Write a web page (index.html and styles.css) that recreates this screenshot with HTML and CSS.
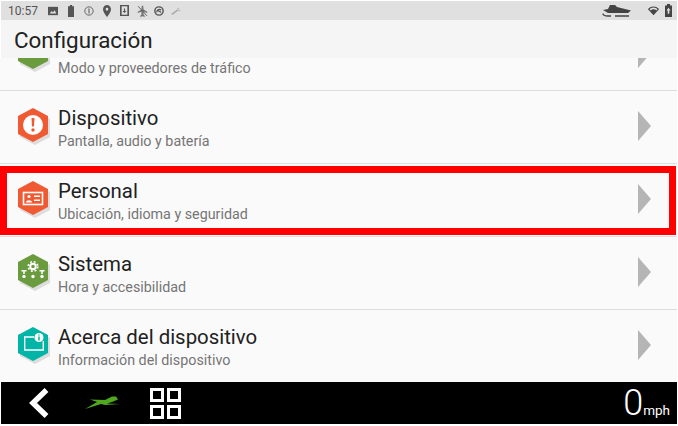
FILE: index.html
```html
<!DOCTYPE html>
<html lang="es">
<head>
  <meta charset="UTF-8" />
  <meta name="viewport" content="width=device-width, initial-scale=1.0" />
  <title>Configuración</title>
  <link rel="stylesheet" href="styles.css">
</head>
<body>
  <div class="screen">

    <div class="status-bar">
      <span class="clock">10:57</span>
      <div class="status-icons">
        <svg width="10" height="10" viewBox="0 0 12 12"><path fill="#555" d="M0 1h12v10H0z"/><path fill="#e0e0e0" d="M2 9l2.500-3 1.500 1.500L8 5l2 4z"/></svg>
        <svg class="gap-a" width="6" height="12" viewBox="0 0 8 14" preserveAspectRatio="none"><path fill="#555" d="M2.500 0h3v1.500H8V14H0V1.500h2.500z"/></svg>
        <svg class="gap-b" width="10" height="10" viewBox="0 0 12 12"><circle cx="6" cy="6" r="5" fill="none" stroke="#666" stroke-width="1.200"/><path stroke="#666" stroke-width="1.400" d="M6 3v6"/></svg>
        <svg class="gap-c" width="8" height="12" viewBox="0 0 10 14" preserveAspectRatio="none"><path fill="#555" fill-rule="evenodd" d="M5 0a5 5 0 0 1 5 5c0 3.500-5 9-5 9S0 8.500 0 5a5 5 0 0 1 5-5zm0 3.300a1.700 1.700 0 1 0 0 3.400 1.700 1.700 0 0 0 0-3.400z"/></svg>
        <svg class="gap-d" width="9" height="11" viewBox="0 0 11 13" preserveAspectRatio="none"><path fill="#555" d="M0 0h11v13H0z"/><path fill="#e0e0e0" d="M2 1.500h7v10H2z"/><path fill="#555" d="M4.800 4h1.400v3H8L5.500 9.500 3 7h1.800z"/></svg>
        <svg class="gap-e" width="11" height="12" viewBox="0 0 15 15" preserveAspectRatio="none"><path fill="#777" d="M6.500 1h2l.5 4.500 5 3v1.500L9 8.500V12l1.500 1.500V15l-3-1-3 1v-1.500L6 12V8.500L1 10V8.500l5-3z"/><path stroke="#555" stroke-width="1.200" d="M1.500 1.500l12 12"/></svg>
        <svg class="gap-f" width="10" height="10" viewBox="0 0 14 14"><circle cx="7" cy="7" r="5.800" fill="none" stroke="#555" stroke-width="2"/><path fill="none" stroke="#555" stroke-width="1.800" d="M4 9a3.500 3.500 0 0 1 6-3M4.500 5.500L10 9"/></svg>
        <svg class="gap-g" width="10" height="8" viewBox="0 0 13 10"><path stroke="#aaa" stroke-width="2" d="M1 9.500L8.500 4"/><path fill="none" stroke="#aaa" stroke-width="1.300" d="M8 2.500l2.500-1.500M9 5l3-1.500"/></svg>
      </div>
      <div class="status-right">
        <svg width="30" height="13" viewBox="0 0 30 13"><path fill="#444" d="M1 6l5-1 2-4h5l2 2 6 1.500 8 2-3 2.500H6z"/><path fill="none" stroke="#444" stroke-width="1.300" d="M1 9.500c0 1.500 2 2.500 5 2.500h3M13 12h14"/></svg>
        <svg class="wifi" width="11" height="10" viewBox="0 0 13 10"><path fill="none" stroke="#444" stroke-width="1.300" d="M.8 2.700a8 8 0 0 1 11.400 0L6.500 9z"/><path fill="#444" d="M2.800 4.500a5.500 5.500 0 0 1 7.400 0L6.500 9z"/></svg>
        <svg class="batt" width="7" height="13" viewBox="0 0 7 14" preserveAspectRatio="none"><path fill="#444" d="M2 0h3v1.500h2V14H0V1.500h2z"/><path fill="#e0e0e0" d="M3.500 4L5.500 7H4.300v3.500H2.700V7H1.500z"/></svg>
      </div>
    </div>

    <header class="title-bar">Configuración</header>

    <div class="list-view">
      <div class="list">
        <div class="row">
          <svg class="hex" width="34" height="38" viewBox="0 0 34 38"><polygon class="hex-shadow" points="17,3 32,11 32,29 17,37 2,29 2,11"/><polygon class="green" points="15,0 30,8 30,26 15,34 0,26 0,8"/></svg>
          <div class="row-text">
            <div class="row-title"></div>
            <div class="row-sub">Modo y proveedores de tráfico</div>
          </div>
          <span class="chevron"></span>
        </div>

        <div class="row">
          <svg class="hex" width="34" height="38" viewBox="0 0 34 38">
            <polygon class="hex-shadow" points="17,3 32,11 32,29 17,37 2,29 2,11"/>
            <polygon class="orange" points="15,0 30,8 30,26 15,34 0,26 0,8"/>
            <circle cx="15" cy="17" r="10" fill="#fff"/>
            <path fill="#f05a33" d="M13.500 10h3l-.5 8.500h-2z"/>
            <circle cx="15" cy="22" r="1.700" fill="#f05a33"/>
          </svg>
          <div class="row-text">
            <div class="row-title">Dispositivo</div>
            <div class="row-sub">Pantalla, audio y batería</div>
          </div>
          <span class="chevron"></span>
        </div>

        <div class="row selected">
          <svg class="hex" width="34" height="38" viewBox="0 0 34 38">
            <polygon class="hex-shadow" points="17,3 32,11 32,29 17,37 2,29 2,11"/>
            <polygon class="orange" points="15,0 30,8 30,26 15,34 0,26 0,8"/>
            <rect x="5.500" y="11.500" width="19" height="12" fill="none" stroke="#fff" stroke-width="1.600"/>
            <circle cx="11" cy="15.500" r="1.600" fill="#fff"/>
            <path fill="#fff" d="M8 21.500c0-3 6-3 6 0zM16 14.500h6V16h-6zM16 18.500h6V20h-6z"/>
          </svg>
          <div class="row-text">
            <div class="row-title">Personal</div>
            <div class="row-sub">Ubicación, idioma y seguridad</div>
          </div>
          <span class="chevron"></span>
        </div>

        <div class="row">
          <svg class="hex" width="34" height="38" viewBox="0 0 34 38">
            <polygon class="hex-shadow" points="17,3 32,11 32,29 17,37 2,29 2,11"/>
            <polygon class="green" points="15,0 30,8 30,26 15,34 0,26 0,8"/>
            <circle cx="15" cy="12.500" r="2.800" fill="none" stroke="#fff" stroke-width="2"/>
            <circle cx="15" cy="12.500" r="4.800" fill="none" stroke="#fff" stroke-width="1.600" stroke-dasharray="1.900 1.900"/>
            <path stroke="#fff" stroke-width="1.500" fill="none" d="M3.500 16.700h5M21.500 16.700h5M6 16.700v3.300M24 16.700v3.300"/>
            <circle cx="6" cy="22.500" r="1.700" fill="#fff"/>
            <circle cx="15" cy="22.500" r="1.700" fill="#fff"/>
            <circle cx="24" cy="22.500" r="1.700" fill="#fff"/>
          </svg>
          <div class="row-text">
            <div class="row-title">Sistema</div>
            <div class="row-sub">Hora y accesibilidad</div>
          </div>
          <span class="chevron"></span>
        </div>

        <div class="row">
          <svg class="hex" width="34" height="38" viewBox="0 0 34 38">
            <polygon class="hex-shadow" points="17,3 32,11 32,29 17,37 2,29 2,11"/>
            <polygon class="teal" points="15,0 30,8 30,26 15,34 0,26 0,8"/>
            <path fill="none" stroke="#fff" stroke-width="1.400" d="M16 10H6.700v13h18.600v-9"/>
            <circle cx="21" cy="10.500" r="4.500" fill="#fff"/>
            <path stroke="#00b5a5" stroke-width="1.500" d="M21 9.500v4M21 7.500v1"/>
          </svg>
          <div class="row-text">
            <div class="row-title">Acerca del dispositivo</div>
            <div class="row-sub">Información del dispositivo</div>
          </div>
          <span class="chevron"></span>
        </div>
      </div>
    </div>

    <div class="nav-bar">
      <svg class="nav-back" width="20" height="30" viewBox="0 0 20 30"><path fill="none" stroke="#fff" stroke-width="5.500" d="M17.500 2L4 15l13.500 13"/></svg>
      <svg class="nav-logo" width="36" height="14" viewBox="0 0 36 14"><path fill="#4fa81f" d="M0 13L12 6 5 3.500l15 .5 7-3.500h4l2 3-6 2.500-5 1.500 13 .5-15 1-4-1z"/></svg>
      <div class="nav-grid">
        <span></span><span></span><span></span><span></span>
      </div>
      <div class="speed"><span class="speed-value">0</span><span class="speed-unit">mph</span></div>
    </div>

  </div>
</body>
</html>
```

FILE: styles.css
```css
html, body {
  margin: 0;
  background: #fff;
}
body {
  font-family: Roboto, "Liberation Sans", sans-serif;
  padding: 1px 1px 2px 0;
}
.screen {
  width: 677px;
  height: 423px;
  display: flex;
  flex-direction: column;
  overflow: hidden;
}

.status-bar {
  height: 19px;
  flex: none;
  margin-left: 1px;
  background: #e0e0e0;
  display: flex;
  align-items: center;
  padding: 0 5px 0 7px;
  color: #555;
  font-size: 12px;
}
.status-icons {
  display: flex;
  align-items: center;
  margin-left: 10px;
}
.gap-a { margin-left: 10px; }
.gap-b { margin-left: 10px; }
.gap-c { margin-left: 9px; }
.gap-d { margin-left: 9px; }
.gap-e { margin-left: 8px; }
.gap-f { margin-left: 6px; }
.gap-g { margin-left: 7px; }
.status-right {
  margin-left: auto;
  display: flex;
  align-items: center;
}
.wifi { margin-left: 16px; }
.batt { margin-left: 6px; }

.title-bar {
  height: 38px;
  flex: none;
  margin-left: 1px;
  box-sizing: border-box;
  padding: 7px 0 0 13px;
  background: #f5f5f5;
  color: #212121;
  font-size: 22.4px;
  line-height: 26px;
}

.list-view {
  flex: 1;
  overflow: hidden;
  background: #fafafa;
}
.list {
  margin-top: -40px;
}
.row {
  height: 72px;
  border-bottom: 1px solid #ddd;
  display: flex;
  align-items: center;
  position: relative;
}
.hex {
  flex: none;
  margin: 0 6px 0 18px;
}
.hex-shadow { fill: #ddd; }
.green { fill: #6a9b3f; }
.orange { fill: #f05a33; }
.teal { fill: #00b5a5; }
.row-text {
  flex: 1;
  padding-top: 2px;
}
.row-title {
  height: 26px;
  font-size: 20.4px;
  line-height: 26px;
  color: #212121;
}
.row-sub {
  font-size: 14.3px;
  line-height: 20px;
  color: #757575;
}
.chevron {
  flex: none;
  width: 13px;
  height: 30px;
  margin: 0 26px 2px 0;
  background: #b5b5b5;
  clip-path: polygon(0 0, 100% 50%, 0 100%);
}
.selected::after {
  content: "";
  position: absolute;
  left: 0;
  right: 1px;
  top: 2px;
  bottom: 1px;
  border: 7px solid #f00;
}

.nav-bar {
  height: 42px;
  flex: none;
  margin-left: 1px;
  background: #000;
  display: flex;
  align-items: center;
  color: #fff;
}
.nav-back { margin-left: 28px; }
.nav-logo { margin-left: 36px; }
.nav-grid {
  margin-left: 29px;
  display: grid;
  grid-template-columns: 14px 14px;
  grid-template-rows: 14px 14px;
  gap: 3px;
}
.nav-grid span {
  border: 3px solid #fff;
}
.speed {
  margin-left: auto;
  margin-right: 7px;
  display: flex;
  align-items: baseline;
}
.speed-value {
  font-size: 36px;
  font-weight: 300;
  line-height: 40px;
}
.speed-unit {
  font-size: 13.5px;
}
```
